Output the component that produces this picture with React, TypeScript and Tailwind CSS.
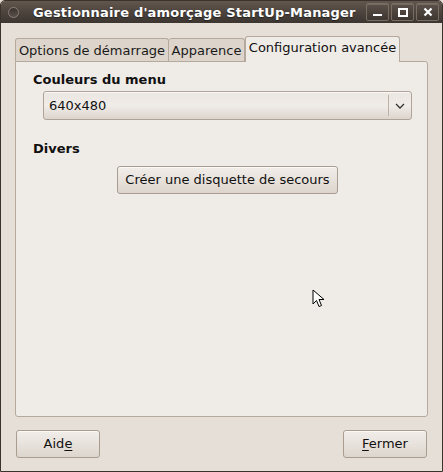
import React from "react";

const font = { fontFamily: '"DejaVu Sans", "Liberation Sans", sans-serif' };

function WinBtn({ children }: { children: React.ReactNode }) {
  return (
    <div className="w-[23px] h-[18px] rounded-[2px] border border-[#7a6d62] bg-gradient-to-b from-[#5c524a] to-[#3e3631] flex items-center justify-center shadow-[inset_0_1px_0_rgba(255,255,255,0.15)]">
      {children}
    </div>
  );
}

function Btn({ children, w }: { children: React.ReactNode; w: string }) {
  return (
    <div
      className={`${w} h-[28px] rounded-[3px] border border-[#a99d91] bg-gradient-to-b from-[#f1ede9] via-[#e8e2dc] to-[#ddd5cd] flex items-center justify-center text-[13px] text-[#101010] shadow-[inset_0_1px_0_#fbf9f7]`}
    >
      {children}
    </div>
  );
}

export default function App() {
  return (
    <div style={font} className="w-[443px] h-[472px] bg-[#e6dfd7] relative overflow-hidden">
      <div className="w-full h-full flex flex-col border border-[#3a322d] rounded-t-[5px] overflow-hidden">
        {/* title bar */}
        <div className="h-[22px] shrink-0 bg-gradient-to-b from-[#62574e] via-[#4d443e] to-[#3c3530] flex items-center pl-[7px] pr-[3px]">
          <div className="w-[11px] h-[11px] rounded-full border border-[#8a7f76] bg-gradient-to-b from-[#3a332e] to-[#5a504a]" />
          <div className="ml-[14px] text-white font-bold text-[13px] leading-none tracking-[0.2px] [text-shadow:0_1px_1px_#222]">
            Gestionnaire d'amorçage StartUp-Manager
          </div>
          <div className="ml-auto flex gap-[2px]">
            <WinBtn>
              <div className="w-[9px] h-[2px] bg-white mt-[6px]" />
            </WinBtn>
            <WinBtn>
              <div className="w-[10px] h-[9px] border-2 border-white" />
            </WinBtn>
            <WinBtn>
              <svg width="10" height="10" viewBox="0 0 10 10">
                <path d="M1.5 1.5 L8.5 8.5 M8.5 1.5 L1.5 8.5" stroke="white" strokeWidth="2.2" />
              </svg>
            </WinBtn>
          </div>
        </div>

        {/* body */}
        <div className="flex-1 flex flex-col px-[14px] pt-[13px] pb-[14px]">
          {/* tabs */}
          <div className="h-[25px] flex items-end relative z-10">
            <div className="h-[23px] w-[154px] border border-[#b5a99d] border-b-0 rounded-t-[3px] bg-[#ddd5cc] flex items-center justify-center text-[13px] text-[#1a1a1a] pt-[1px]">
              Options de démarrage
            </div>
            <div className="h-[23px] w-[76px] border border-[#b5a99d] border-b-0 border-l-0 rounded-t-[3px] bg-[#ddd5cc] flex items-center justify-center text-[13px] text-[#1a1a1a] pt-[1px]">
              Apparence
            </div>
            <div className="h-[26px] w-[155px] border border-[#b5a99d] border-b-0 rounded-t-[3px] bg-[#efebe7] flex items-center justify-center text-[13px] text-[#111] -mb-[1px] pb-[3px]">
              Configuration avancée
            </div>
          </div>
          {/* panel */}
          <div className="h-[356px] border border-[#b5a99d] rounded-b-[3px] rounded-tr-[3px] bg-[#efebe7] pl-[17px] pr-[15px] pt-[10px] flex flex-col">
            <div className="font-bold text-[13px] text-[#111] leading-[16px]">Couleurs du menu</div>
            <div className="ml-[10px] mt-[3px] h-[29px] rounded-[3px] border border-[#b0a498] bg-gradient-to-b from-[#ebe6e1] via-[#f0ece8] to-[#ddd5cd] flex items-center shadow-[inset_0_1px_0_#fbf9f7]">
              <div className="flex-1 pl-[5px] text-[13px] text-[#111]">640x480</div>
              <div className="w-px h-[21px] bg-[#bdb2a7]" />
              <div className="w-[22px] flex items-center justify-center">
                <svg width="10" height="6" viewBox="0 0 10 6">
                  <path d="M1 1 L5 5 L9 1" stroke="#333" strokeWidth="1.3" fill="none" />
                </svg>
              </div>
            </div>
            <div className="font-bold text-[13px] text-[#111] leading-[16px] mt-[21px]">Divers</div>
            <div className="mt-[9px] ml-[84px]">
              <Btn w="w-[221px]">Créer une disquette de secours</Btn>
            </div>
          </div>
          {/* bottom buttons */}
          <div className="mt-[13px] flex justify-between px-[1px]">
            <Btn w="w-[84px]">
              <span>
                Aid<span className="underline underline-offset-2">e</span>
              </span>
            </Btn>
            <Btn w="w-[84px]">
              <span>
                <span className="underline underline-offset-2">F</span>ermer
              </span>
            </Btn>
          </div>
        </div>
      </div>
      {/* mouse cursor */}
      <svg className="absolute left-[312px] top-[289px]" width="14" height="20" viewBox="0 0 14 20">
        <path d="M1 1 L1 15 L4.5 11.5 L7 17.5 L9.5 16.5 L7 10.5 L12 10.5 Z" fill="white" stroke="black" strokeWidth="1" strokeLinejoin="round" />
      </svg>
    </div>
  );
}
